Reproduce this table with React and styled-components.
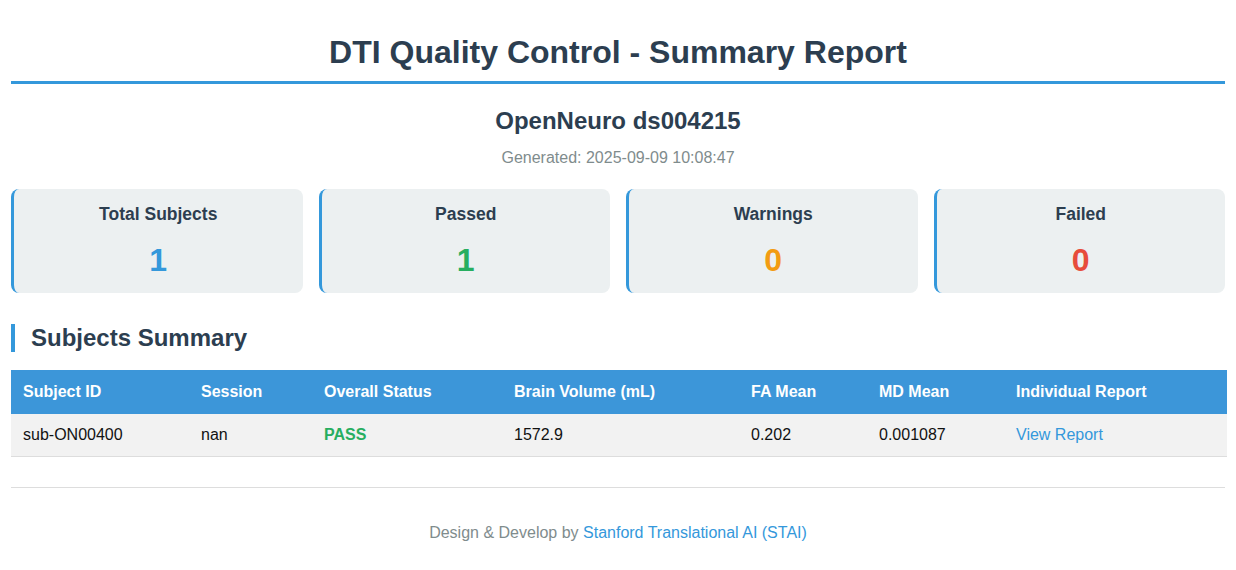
import React from 'react';
import styled, { createGlobalStyle } from 'styled-components';

const GlobalStyle = createGlobalStyle`
    body {
        margin: 0;
        background: #fff;
        font-family: "Liberation Sans", Arial, sans-serif;
        color: #333;
    }
`;

const stats = [
    { label: 'Total Subjects', value: 1, color: '#3498db' },
    { label: 'Passed', value: 1, color: '#27ae60' },
    { label: 'Warnings', value: 0, color: '#f39c12' },
    { label: 'Failed', value: 0, color: '#e74c3c' },
];

const columns = [
    { name: 'Subject ID', width: 178 },
    { name: 'Session', width: 123 },
    { name: 'Overall Status', width: 190 },
    { name: 'Brain Volume (mL)', width: 237 },
    { name: 'FA Mean', width: 128 },
    { name: 'MD Mean', width: 137 },
    { name: 'Individual Report', width: 223 },
];

const App = () => {
    return (
        <Page>
            <GlobalStyle />
            <Title>DTI Quality Control - Summary Report</Title>
            <Dataset>OpenNeuro ds004215</Dataset>
            <Generated>Generated: 2025-09-09 10:08:47</Generated>

            <Cards>
                {stats.map((s) => (
                    <Card key={s.label}>
                        <h3>{s.label}</h3>
                        <Value color={s.color}>{s.value}</Value>
                    </Card>
                ))}
            </Cards>

            <SectionTitle>Subjects Summary</SectionTitle>

            <Table>
                <colgroup>
                    {columns.map((c) => (
                        <col key={c.name} style={{ width: c.width }} />
                    ))}
                </colgroup>
                <thead>
                    <tr>
                        {columns.map((c) => (
                            <th key={c.name}>{c.name}</th>
                        ))}
                    </tr>
                </thead>
                <tbody>
                    <tr>
                        <td>sub-ON00400</td>
                        <td>nan</td>
                        <td><Status>PASS</Status></td>
                        <td>1572.9</td>
                        <td>0.202</td>
                        <td>0.001087</td>
                        <td><a href="#">View Report</a></td>
                    </tr>
                </tbody>
            </Table>

            <Footer>
                Design &amp; Develop by <a href="#">Stanford Translational AI (STAI)</a>
            </Footer>
        </Page>
    );
}

export default App;

const Page = styled.div`
    padding: 18px 11px 0;
`;

const Title = styled.h1`
    margin: 0;
    padding: 16px 0 11px;
    text-align: center;
    font-size: 32px;
    line-height: 36px;
    font-weight: 700;
    color: #2c3e50;
    border-bottom: 3px solid #3498db;
`;

const Dataset = styled.h2`
    margin: 23px 0 0;
    text-align: center;
    font-size: 24px;
    line-height: 28px;
    font-weight: 700;
    color: #2c3e50;
`;

const Generated = styled.p`
    margin: 14px 0 0;
    text-align: center;
    font-size: 16px;
    line-height: 18px;
    color: #7f8c8d;
`;

const Cards = styled.div`
    display: grid;
    grid-template-columns: repeat(4, 1fr);
    gap: 16px;
    margin-top: 22px;
`;

const Card = styled.div`
    height: 104px;
    box-sizing: border-box;
    padding: 16px 12px 0;
    background: #ecf0f1;
    border-left: 3px solid #3498db;
    border-radius: 8px;
    text-align: center;

    h3 {
        margin: 0;
        font-size: 17.5px;
        font-weight: 700;
        color: #2c3e50;
        line-height: 18px;
    }
`;

const Value = styled.div`
    margin-top: 19px;
    font-size: 32px;
    font-weight: 700;
    line-height: 36px;
    color: ${({ color }) => color};
`;

const SectionTitle = styled.h2`
    margin: 31px 0 0;
    padding-left: 16px;
    border-left: 4px solid #3498db;
    font-size: 24px;
    font-weight: 700;
    line-height: 28px;
    color: #2c3e50;
`;

const Table = styled.table`
    width: 100%;
    margin-top: 18px;
    border-collapse: collapse;
    table-layout: fixed;
    font-size: 16px;

    th {
        background: #3c96d9;
        color: #fff;
        font-weight: 700;
        text-align: left;
        padding: 0 12px;
        height: 44px;
    }

    td {
        background: #f2f2f2;
        color: #111;
        padding: 0 12px;
        height: 42px;
        border-bottom: 1px solid #ddd;
    }

    a {
        color: #3498db;
        text-decoration: none;
    }
`;

const Status = styled.span`
    color: #27ae60;
    font-weight: 700;
`;

const Footer = styled.footer`
    margin-top: 30px;
    padding: 36px 0 20px;
    border-top: 1px solid #ddd;
    text-align: center;
    font-size: 16px;
    line-height: 18px;
    color: #7f8c8d;

    a {
        color: #3498db;
        text-decoration: none;
    }
`;
